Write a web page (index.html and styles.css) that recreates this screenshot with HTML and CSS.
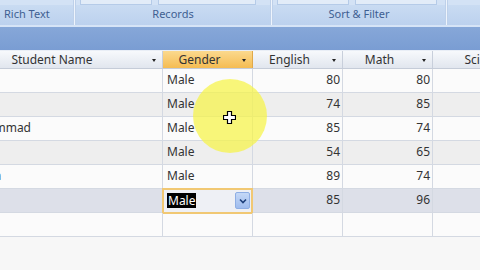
FILE: index.html
```html
<!DOCTYPE html>
<html>
<head>
<meta charset="utf-8">
<link rel="stylesheet" href="styles.css">
</head>
<body>
<div class="ribbon">
  <div class="group g1"><div class="btns"></div><div class="label left">Rich Text</div></div>
  <div class="sep"></div>
  <div class="group g2"><div class="btns"><span class="btn b1"></span><span class="btn b2"></span></div><div class="label">Records</div></div>
  <div class="sep"></div>
  <div class="group g3"><div class="btns"><span class="btn b3"></span><span class="btn b4"></span></div><div class="label">Sort &amp; Filter</div></div>
  <div class="sep"></div>
  <div class="group g4"><div class="btns"></div><div class="label"></div></div>
</div>
<div class="band"></div>
<div class="sheet">
  <div class="row head">
    <div class="cell hc"><span class="ht">Student Name</span><span class="arr"></span></div>
    <div class="cell hc sel"><span class="ht">Gender</span><span class="arr"></span></div>
    <div class="cell hc"><span class="ht">English</span><span class="arr"></span></div>
    <div class="cell hc"><span class="ht">Math</span><span class="arr"></span></div>
    <div class="cell hc"><span class="ht">Science</span><span class="arr"></span></div>
  </div>
  <div class="row odd">
    <div class="cell name">Ali</div><div class="cell txt">Male</div><div class="cell num">80</div><div class="cell num">80</div><div class="cell num"></div>
  </div>
  <div class="row even">
    <div class="cell name">Omar</div><div class="cell txt">Male</div><div class="cell num">74</div><div class="cell num">85</div><div class="cell num"></div>
  </div>
  <div class="row odd">
    <div class="cell name">Muhammad</div><div class="cell txt">Male</div><div class="cell num">85</div><div class="cell num">74</div><div class="cell num"></div>
  </div>
  <div class="row even">
    <div class="cell name">Saad</div><div class="cell txt">Male</div><div class="cell num">54</div><div class="cell num">65</div><div class="cell num"></div>
  </div>
  <div class="row odd">
    <div class="cell name">Hamza</div><div class="cell txt">Male</div><div class="cell num">89</div><div class="cell num">74</div><div class="cell num"></div>
  </div>
  <div class="row cur">
    <div class="cell name">Zain</div>
    <div class="cell txt edit"><span class="mark">Male</span><span class="dd"><svg width="8" height="6" viewBox="0 0 8 6"><path d="M1 1.5 L4 4.5 L7 1.5" fill="none" stroke="#1d3f7a" stroke-width="1.6"/></svg></span></div>
    <div class="cell num">85</div><div class="cell num">96</div><div class="cell num"></div>
  </div>
  <div class="row odd">
    <div class="cell name"></div><div class="cell txt"></div><div class="cell num"></div><div class="cell num"></div><div class="cell num"></div>
  </div>
</div>
<div class="hilite"></div>
<svg class="cursor" width="13" height="13" viewBox="0 0 13 13"><path d="M4.5 0.5 H8.5 V4.5 H12.5 V8.5 H8.5 V12.5 H4.5 V8.5 H0.5 V4.5 H4.5 Z" fill="#fff" stroke="#000" stroke-width="1.2"/></svg>
</body>
</html>
```
FILE: styles.css
```css
html, body { margin: 0; padding: 0; }
body {
  width: 480px; height: 270px; overflow: hidden;
  background: #f7f7f7;
  font-family: "Noto Sans", "Open Sans", sans-serif;
  color: #333;
  position: relative;
}
.ribbon {
  display: flex; height: 25px;
  background: #c6d9f1;
  border-bottom: 2px solid #d6e4f6;
}
.group { display: flex; flex-direction: column; }
.g1 { width: 73px; }
.g2 { width: 194px; }
.g3 { width: 172px; }
.g4 { flex: 1; }
.btns {
  height: 5px; display: flex; gap: 6px; padding: 0 4px;
  background: #d3e2f5;
}
.btn { height: 4px; background: #e2ecf8; border: 1px solid #b5cbe8; border-top: none; }
.b1 { width: 70px; } .b2 { width: 96px; } .b3 { width: 70px; } .b4 { width: 80px; }
.label {
  flex: 1; font-size: 11px; line-height: 18px; text-align: center;
  color: #3f5f92;
  background: linear-gradient(#c9dbf2, #bcd1ee);
}
.label.left { text-align: left; padding-left: 4px; }
.sep {
  width: 3px;
  background: linear-gradient(90deg, #a6bfe1, #eef4fc 50%, #a6bfe1);
}
.band {
  height: 23px;
  background: linear-gradient(#86a7d8, #7a9dd3);
}
.sheet { margin-left: -42px; }
.row {
  display: grid;
  grid-template-columns: 205px 90px 90px 90px 122px;
  height: 24px; box-sizing: border-box;
  border-bottom: 1px solid #d4d9e2;
  font-size: 12px;
}
.cell {
  border-right: 1px solid #d4d9e2;
  display: flex; align-items: center;
  padding-bottom: 3px; box-sizing: border-box;
  overflow: hidden; white-space: nowrap;
}
.head {
  height: 19px;
  border-top: 1px solid #e9eef6;
  border-bottom: 1px solid #c5ccd8;
}
.head .cell {
  padding-bottom: 0;
  background: linear-gradient(#f7f9fc, #e1e6ee);
  border-right-color: #c8cfdb;
}
.head .cell.sel { background: linear-gradient(#fbd98e, #f5bc52); border-right-color: #e0a94a; }
.ht { flex: 1; text-align: center; }
.arr {
  width: 16px; height: 100%;
  display: flex; align-items: center; justify-content: center;
}
.arr::before {
  content: ""; border-left: 2.5px solid transparent; border-right: 2.5px solid transparent;
  border-top: 3px solid #222; margin-top: 1px;
}
.odd { background: #fbfbfb; }
.even { background: #eeeeee; }
.cur { background: #dde0e9; }
.name, .txt { padding-left: 4px; }
.num { justify-content: flex-end; padding-right: 2px; }
.edit {
  border: 2px solid #f1c873;
  margin: -1px 0 -2px -1px;
  padding-left: 3px; padding-right: 1px; padding-bottom: 1px;
  background: #eef0f5;
}
.mark { background: #000; color: #fff; padding: 0 1px; line-height: 15px; }
.dd {
  margin-left: auto; width: 15px; height: 17px; box-sizing: border-box;
  border: 1px solid #8eaee4; border-radius: 2px;
  background: linear-gradient(#c4d8f6, #9fbcee);
  display: flex; align-items: center; justify-content: center;
}
.hilite {
  position: absolute; left: 193px; top: 79px; width: 74px; height: 74px;
  border-radius: 50%;
  background: rgba(246, 244, 70, 0.72);
}
.cursor { position: absolute; left: 223px; top: 111px; }
```
